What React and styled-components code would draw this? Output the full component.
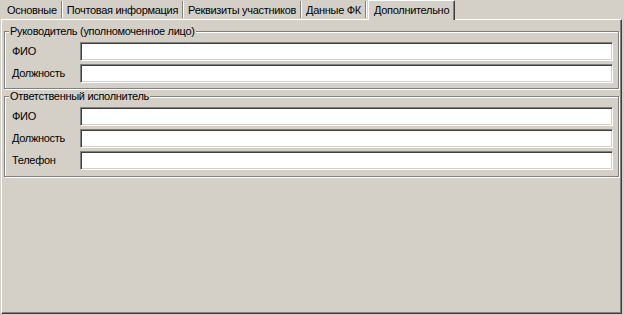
import React from 'react';
import styled, { createGlobalStyle } from 'styled-components';

const Global = createGlobalStyle`
  html, body { margin: 0; padding: 0; background: #d4d0c8; }
  body {
    width: 624px; height: 315px; overflow: hidden;
    font-family: "Liberation Sans", Tahoma, Arial, sans-serif;
    font-size: 11px; letter-spacing: -0.3px; color: #000;
  }
  * { box-sizing: border-box; }
`;

const Window = styled.div`
  width: 624px;
  height: 315px;
  display: flex;
  flex-direction: column;
  padding: 0 2px 1px 1px;
  background: #d4d0c8;
`;

const TabStrip = styled.div`
  display: flex;
  align-items: flex-end;
  height: 19px;
  padding-left: 2px;
  position: relative;
  z-index: 1;
`;

const Tab = styled.div`
  display: flex;
  align-items: center;
  white-space: nowrap;
  background: #d4d0c8;
  ${p => p.$active ? `
    height: 20px;
    margin-bottom: -1px;
    margin-left: 1px;
    padding: 0 5px 2px 5px;
    border-left: 1px solid #fff;
    border-top: 1px solid #fff;
    border-right: 1px solid #404040;
    box-shadow: inset -1px 0 #808080;
  ` : `
    height: 17px;
    padding: 0 4px 0 4px;
    border-right: 1px solid #808080;
    box-shadow: 1px 0 #fff;
    margin-right: 1px;
    margin-bottom: 1px;
  `}
`;

const Panel = styled.div`
  flex: 1;
  display: flex;
  flex-direction: column;
  gap: 1px;
  padding: 5px 2px 0 2px;
  border-top: 1px solid #fff;
  border-left: 1px solid #fff;
  border-right: 1px solid #404040;
  border-bottom: 1px solid #404040;
  box-shadow: inset -1px -1px #808080;
`;

const Group = styled.fieldset`
  margin: 0;
  padding: 5px 5px ${p => p.$bottom}px 7px;
  border: 1px solid #808080;
  box-shadow: inset 1px 1px #fff, 1px 1px #fff;
  display: flex;
  flex-direction: column;
  gap: 3px;
  min-width: 0;
`;

const Legend = styled.legend`
  padding: 0 1px;
  margin-left: -3px;
  line-height: 12px;
  background: #d4d0c8;
`;

const Row = styled.div`
  display: grid;
  grid-template-columns: 68px 1fr;
  align-items: center;
`;

const Label = styled.label`
  line-height: 13px;
`;

const Input = styled.input`
  height: 19px;
  width: 100%;
  margin: 0;
  padding: 0 3px;
  font: inherit;
  background: #fff;
  border: 1px solid;
  border-color: #808080 #fff #fff #808080;
  box-shadow: inset 1px 1px #404040, inset -1px -1px #d4d0c8;
  outline: none;
`;

const tabs = ['Основные', 'Почтовая информация', 'Реквизиты участников', 'Данные ФК', 'Дополнительно'];

const groups = [
  { title: 'Руководитель (уполномоченное лицо)', fields: ['ФИО', 'Должность'], bottom: 5 },
  { title: 'Ответственный исполнитель', fields: ['ФИО', 'Должность', 'Телефон'], bottom: 6 },
];

export default function App() {
  return (
    <>
      <Global />
      <Window>
        <TabStrip>
          {tabs.map((t, i) => (
            <Tab key={t} $active={i === 4}>{t}</Tab>
          ))}
        </TabStrip>
        <Panel>
          {groups.map(g => (
            <Group key={g.title} $bottom={g.bottom}>
              <Legend>{g.title}</Legend>
              {g.fields.map(f => (
                <Row key={f}>
                  <Label>{f}</Label>
                  <Input type="text" />
                </Row>
              ))}
            </Group>
          ))}
        </Panel>
      </Window>
    </>
  );
}
